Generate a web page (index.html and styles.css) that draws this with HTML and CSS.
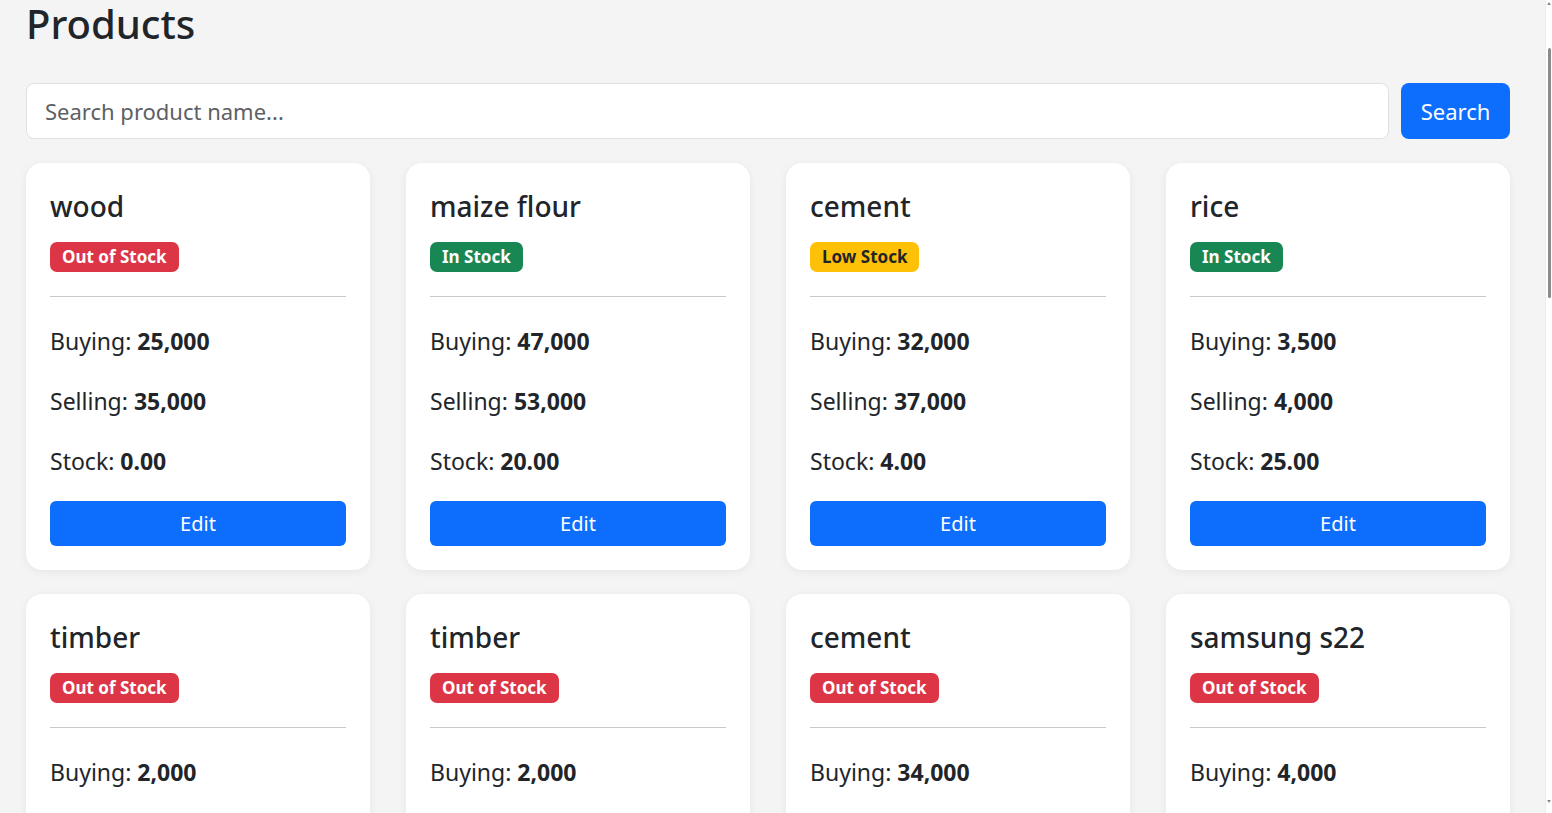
FILE: index.html
```html
<!DOCTYPE html>
<html lang="en">
<head>
<meta charset="utf-8">
<title>Products</title>
<link rel="stylesheet" href="styles.css">
</head>
<body>
<div class="page">
  <h1 class="page-title">Products</h1>
  <form class="search-row">
    <input class="search-input" type="text" placeholder="Search product name...">
    <button class="btn btn-search" type="button">Search</button>
  </form>
  <div class="grid">
    <div class="card">
      <h3 class="card-title">wood</h3>
      <div class="badge-row"><span class="badge badge-danger">Out of Stock</span></div>
      <hr class="divider">
      <p class="line">Buying: <b>25,000</b></p>
      <p class="line">Selling: <b>35,000</b></p>
      <p class="line">Stock: <b>0.00</b></p>
      <button class="btn btn-edit" type="button">Edit</button>
    </div>
    <div class="card">
      <h3 class="card-title">maize flour</h3>
      <div class="badge-row"><span class="badge badge-success">In Stock</span></div>
      <hr class="divider">
      <p class="line">Buying: <b>47,000</b></p>
      <p class="line">Selling: <b>53,000</b></p>
      <p class="line">Stock: <b>20.00</b></p>
      <button class="btn btn-edit" type="button">Edit</button>
    </div>
    <div class="card">
      <h3 class="card-title">cement</h3>
      <div class="badge-row"><span class="badge badge-warning">Low Stock</span></div>
      <hr class="divider">
      <p class="line">Buying: <b>32,000</b></p>
      <p class="line">Selling: <b>37,000</b></p>
      <p class="line">Stock: <b>4.00</b></p>
      <button class="btn btn-edit" type="button">Edit</button>
    </div>
    <div class="card">
      <h3 class="card-title">rice</h3>
      <div class="badge-row"><span class="badge badge-success">In Stock</span></div>
      <hr class="divider">
      <p class="line">Buying: <b>3,500</b></p>
      <p class="line">Selling: <b>4,000</b></p>
      <p class="line">Stock: <b>25.00</b></p>
      <button class="btn btn-edit" type="button">Edit</button>
    </div>
    <div class="card">
      <h3 class="card-title">timber</h3>
      <div class="badge-row"><span class="badge badge-danger">Out of Stock</span></div>
      <hr class="divider">
      <p class="line">Buying: <b>2,000</b></p>
      <p class="line">Selling: <b>3,000</b></p>
      <p class="line">Stock: <b>0.00</b></p>
      <button class="btn btn-edit" type="button">Edit</button>
    </div>
    <div class="card">
      <h3 class="card-title">timber</h3>
      <div class="badge-row"><span class="badge badge-danger">Out of Stock</span></div>
      <hr class="divider">
      <p class="line">Buying: <b>2,000</b></p>
      <p class="line">Selling: <b>3,000</b></p>
      <p class="line">Stock: <b>0.00</b></p>
      <button class="btn btn-edit" type="button">Edit</button>
    </div>
    <div class="card">
      <h3 class="card-title">cement</h3>
      <div class="badge-row"><span class="badge badge-danger">Out of Stock</span></div>
      <hr class="divider">
      <p class="line">Buying: <b>34,000</b></p>
      <p class="line">Selling: <b>38,000</b></p>
      <p class="line">Stock: <b>0.00</b></p>
      <button class="btn btn-edit" type="button">Edit</button>
    </div>
    <div class="card">
      <h3 class="card-title">samsung s22</h3>
      <div class="badge-row"><span class="badge badge-danger">Out of Stock</span></div>
      <hr class="divider">
      <p class="line">Buying: <b>4,000</b></p>
      <p class="line">Selling: <b>5,000</b></p>
      <p class="line">Stock: <b>0.00</b></p>
      <button class="btn btn-edit" type="button">Edit</button>
    </div>
  </div>
</div>
<div class="scrollbar">
  <span class="sb-arrow sb-up"></span>
  <span class="sb-thumb"></span>
  <span class="sb-arrow sb-down"></span>
</div>
</body>
</html>
```

FILE: styles.css
```css
html {
  overflow: hidden;
}
body {
  margin: 0;
  background: #f4f4f4;
  color: #212529;
  font-family: "Noto Sans", "Open Sans", Arial, sans-serif;
}
.page {
  padding: 0 42px 40px 26px;
}
.page-title {
  margin: 0 0 35px 0;
  font-size: 40px;
  line-height: 48px;
  font-weight: 500;
}
.search-row {
  display: flex;
  gap: 12px;
  height: 56px;
  margin: 0 0 24px 0;
}
.search-input {
  flex: 1;
  box-sizing: border-box;
  height: 56px;
  border: 1px solid #dee2e6;
  border-radius: 8px;
  background: #fff;
  padding: 0 18px;
  font-family: inherit;
  font-size: 22px;
  color: #212529;
  outline: none;
}
.search-input::placeholder {
  color: #5d6064;
}
.btn {
  border: 0;
  font-family: inherit;
  color: #fff;
  background: #0d6efd;
  cursor: pointer;
}
.btn-search {
  box-sizing: border-box;
  width: 109px;
  height: 56px;
  border-radius: 8px;
  font-size: 22px;
  padding: 0;
}
.grid {
  display: grid;
  grid-template-columns: repeat(4, 1fr);
  column-gap: 36px;
  row-gap: 24px;
}
.card {
  display: flex;
  flex-direction: column;
  background: #fff;
  border-radius: 16px;
  padding: 24px;
  box-shadow: 0 2px 8px rgba(0, 0, 0, 0.06);
}
.card-title {
  margin: 2px 0 19px 0;
  font-size: 28px;
  line-height: 34px;
  font-weight: 500;
}
.badge-row {
  display: flex;
  height: 30px;
}
.badge {
  display: inline-block;
  height: 30px;
  line-height: 30px;
  padding: 0 12px;
  border-radius: 7px;
  font-size: 17px;
  font-weight: 700;
  color: #fff;
}
.badge-danger { background: #dc3545; }
.badge-success { background: #198754; }
.badge-warning { background: #ffc107; color: #212529; }
.divider {
  margin: 24px 0 0 0;
  border: 0;
  border-top: 1px solid #c8c9ca;
  height: 0;
}
.line {
  margin: 0 0 24px 0;
  font-size: 23px;
  line-height: 36px;
}
.divider + .line {
  margin-top: 26px;
}
.line b {
  font-weight: 700;
}
.btn-edit {
  margin-top: -2px;
  height: 45px;
  border-radius: 6px;
  font-size: 20px;
  padding: 0;
}
.scrollbar {
  position: fixed;
  top: 0;
  right: 0;
  width: 6px;
  height: 100%;
  background: #fff;
  border-left: 1px solid #ececec;
}
.sb-thumb {
  position: absolute;
  top: 48px;
  left: 2px;
  width: 3px;
  height: 250px;
  border-radius: 2px;
  background: #8b8b8b;
}
.sb-arrow {
  position: absolute;
  left: 1px;
  width: 0;
  height: 0;
  border-left: 2px solid transparent;
  border-right: 2px solid transparent;
}
.sb-up {
  top: 2px;
  border-bottom: 3px solid #8b8b8b;
}
.sb-down {
  bottom: 10px;
  border-top: 3px solid #8b8b8b;
}
```
